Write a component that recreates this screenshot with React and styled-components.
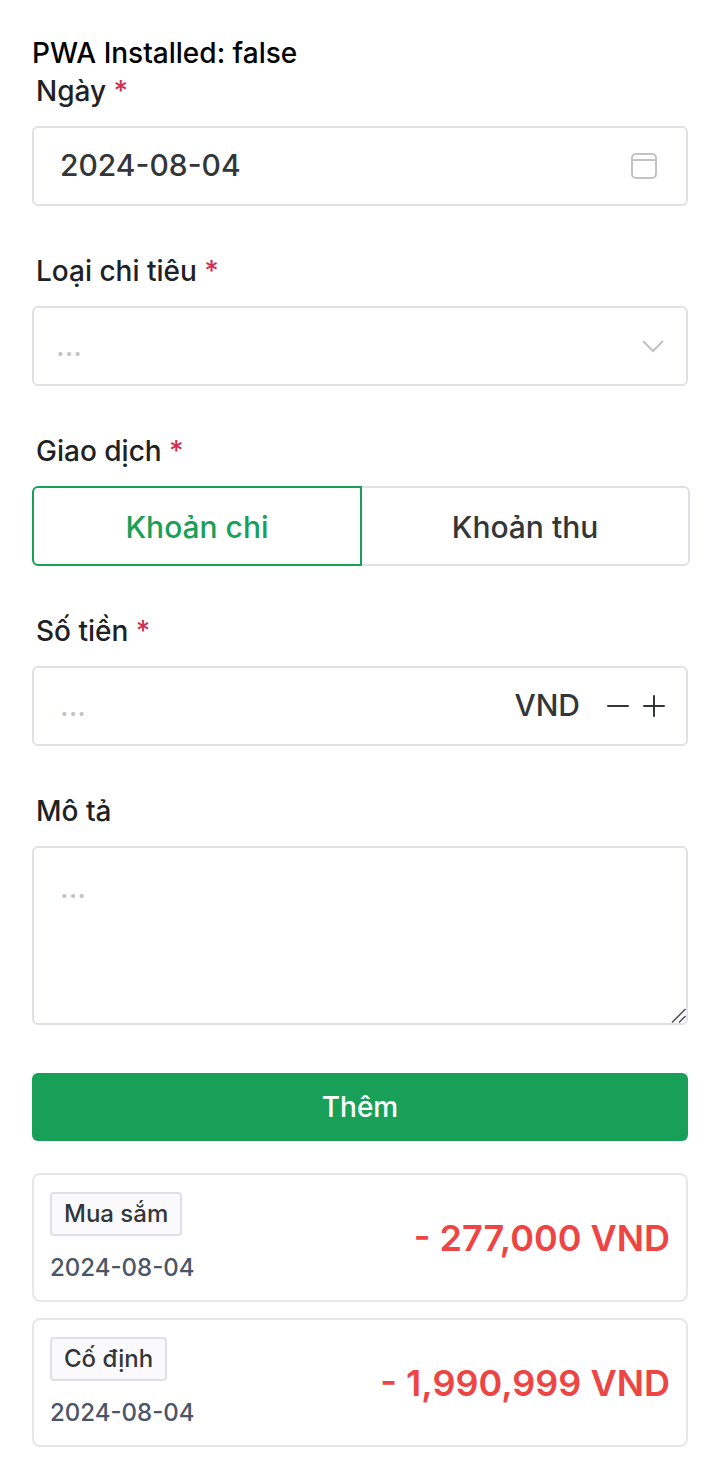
import React, { useState } from "react";
import styled, { createGlobalStyle } from "styled-components";

const GlobalStyle = createGlobalStyle`
  *, *::before, *::after { box-sizing: border-box; }
  body {
    margin: 0;
    background: #fff;
    color: #000;
    font-family: Inter, "Liberation Sans", sans-serif;
    font-size: 28px;
    font-weight: 500;
    line-height: 42px;
  }
  button, input, select, textarea { font: inherit; color: inherit; margin: 0; }
`;

const Page = styled.main`
  padding: 32px;
`;

const Status = styled.p`
  margin: 0;
`;

const Field = styled.div`
  padding-bottom: 48px;
`;

const Group = styled.fieldset`
  min-width: 0;
  margin: 0;
  border: 0;
  padding: 0 0 48px;
`;

const Label = styled.label`
  display: block;
  float: ${(p) => (p.as === "legend" ? "left" : "none")};
  width: 100%;
  height: 52px;
  padding: 0 0 0 4px;
  color: #1f2225;
  line-height: 35px;
`;

const Required = styled.span`
  color: #d03050;
`;

const Box = styled.div`
  display: flex;
  align-items: center;
  clear: both;
  height: 80px;
  padding-right: ${(p) => p.$right}px;
  border: 2px solid #e0e0e6;
  border-radius: 6px;
  background: #fff;
  color: #333639;
  font-size: 30px;
`;

const TextInput = styled.input`
  flex: 1;
  min-width: 0;
  height: 100%;
  padding: 0 0 2px 26px;
  border: 0;
  outline: 0;
  background: transparent;
  &::placeholder { color: #c2c2c2; font-weight: 400; opacity: 1; }
`;

const SelectWrap = styled.div`
  display: grid;
  align-items: center;
  & > * { grid-area: 1 / 1; }
  & > svg { justify-self: end; margin-right: 24px; pointer-events: none; }
`;

const Select = styled.select`
  width: 100%;
  height: 80px;
  padding: 0 60px 2px 22px;
  border: 2px solid #e0e0e6;
  border-radius: 6px;
  outline: 0;
  appearance: none;
  background: #fff;
  color: ${(p) => (p.value ? "#333639" : "#c2c2c2")};
  font-size: 30px;
  font-weight: ${(p) => (p.value ? 500 : 400)};
`;

const Segments = styled.div`
  display: flex;
  clear: both;
  margin-right: -2px;
`;

const Segment = styled.label`
  position: relative;
  flex: 1;
  display: flex;
  align-items: center;
  justify-content: center;
  height: 80px;
  padding-top: 2px;
  border: 2px solid #e0e0e6;
  color: #333639;
  font-size: 30px;
  cursor: pointer;
  &:first-child { border-radius: 6px 0 0 6px; }
  &:last-child { border-radius: 0 6px 6px 0; margin-left: -2px; }
  &:has(input:checked) { z-index: 1; border-color: #18a058; color: #18a058; }
`;

const Radio = styled.input`
  position: absolute;
  inset: 0;
  width: 100%;
  height: 100%;
  opacity: 0;
  cursor: pointer;
`;

const Currency = styled.span`
  margin-right: 20px;
  padding-bottom: 2px;
`;

const StepButton = styled.button`
  display: flex;
  padding: 0;
  border: 0;
  background: none;
  cursor: pointer;
`;

const TextAreaWrap = styled.div`
  position: relative;
  & > svg {
    position: absolute;
    right: 1px;
    bottom: 1px;
    pointer-events: none;
  }
`;

const TextArea = styled.textarea`
  display: block;
  width: 100%;
  padding: 16px 26px 18px;
  border: 2px solid #e0e0e6;
  border-radius: 6px;
  outline: 0;
  resize: vertical;
  color: #333639;
  font-size: 30px;
  line-height: 47px;
  &::placeholder { color: #c2c2c2; font-weight: 400; opacity: 1; }
  &::-webkit-resizer { background: transparent; }
`;

const Submit = styled.button`
  display: block;
  width: 100%;
  height: 68px;
  border: 0;
  border-radius: 6px;
  background: #18a058;
  color: #fff;
  cursor: pointer;
`;

const Entries = styled.ul`
  display: flex;
  flex-direction: column;
  gap: 16px;
  margin: 32px 0 0;
  padding: 0;
  list-style: none;
`;

const Entry = styled.li`
  display: flex;
  align-items: center;
  justify-content: space-between;
  padding: 17px 16px 15px;
  border: 2px solid #e5e7eb;
  border-radius: 8px;
`;

const Details = styled.div`
  display: flex;
  flex-direction: column;
  align-items: flex-start;
  gap: 15px;
  font-size: 24px;
`;

const Tag = styled.span`
  height: 44px;
  padding: 0 12px;
  border: 2px solid #e0e0e6;
  border-radius: 4px;
  background: #fafafc;
  color: #333639;
  line-height: 40px;
`;

const DateText = styled.time`
  color: #4a5568;
  line-height: 34px;
`;

const Amount = styled.span`
  padding-bottom: 2px;
  color: #ef4444;
  font-size: 36px;
  font-weight: 600;
`;

const CalendarIcon = () => (
  <svg width="28" height="28" viewBox="0 0 28 28" fill="none" stroke="#c2c2c2" strokeWidth="2" aria-hidden="true">
    <rect x="2" y="2" width="24" height="24" rx="4" />
    <path d="M2 8H26" />
  </svg>
);

const ChevronIcon = () => (
  <svg width="22" height="14" viewBox="0 0 22 14" fill="none" stroke="#c2c2c2" strokeWidth="2" aria-hidden="true">
    <path d="M1 2L11 12L21 2" />
  </svg>
);

const StepIcon = ({ plus }) => (
  <svg width="36" height="36" viewBox="0 0 36 36" fill="none" stroke="#333639" strokeWidth="2" strokeLinecap="round" aria-hidden="true">
    <path d={plus ? "M8 18H28M18 8V28" : "M8 18H28"} />
  </svg>
);

const ResizeGrip = () => (
  <svg width="16" height="16" viewBox="0 0 16 16" fill="none" stroke="#555" strokeWidth="1.6" aria-hidden="true">
    <path d="M1 14.5L14.5 1M8 14.5L14.5 8" />
  </svg>
);

const Star = () => <Required>&nbsp;*</Required>;

const entries = [
  { category: "Mua sắm", date: "2024-08-04", amount: "- 277,000 VND" },
  { category: "Cố định", date: "2024-08-04", amount: "- 1,990,999 VND" },
];

export default function App() {
  const [date, setDate] = useState("2024-08-04");
  const [category, setCategory] = useState("");
  const [kind, setKind] = useState("Khoản chi");
  const [money, setMoney] = useState("");
  const step = (n) => setMoney(String((Number(money) || 0) + n));

  return (
    <>
      <GlobalStyle />
      <Page>
        <Status>PWA Installed: false</Status>
        <form onSubmit={(e) => e.preventDefault()}>
          <Field>
            <Label htmlFor="date">Ngày<Star /></Label>
            <Box $right={28}>
              <TextInput id="date" value={date} onChange={(e) => setDate(e.target.value)} />
              <CalendarIcon />
            </Box>
          </Field>
          <Field>
            <Label htmlFor="category">Loại chi tiêu<Star /></Label>
            <SelectWrap>
              <Select id="category" value={category} onChange={(e) => setCategory(e.target.value)}>
                <option value="">...</option>
                {entries.map((e) => <option key={e.category}>{e.category}</option>)}
              </Select>
              <ChevronIcon />
            </SelectWrap>
          </Field>
          <Group>
            <Label as="legend">Giao dịch<Star /></Label>
            <Segments>
              {["Khoản chi", "Khoản thu"].map((name) => (
                <Segment key={name}>
                  <Radio type="radio" name="kind" checked={kind === name} onChange={() => setKind(name)} />
                  {name}
                </Segment>
              ))}
            </Segments>
          </Group>
          <Field>
            <Label htmlFor="money">Số tiền<Star /></Label>
            <Box $right={14}>
              <TextInput id="money" inputMode="numeric" placeholder="..." value={money} onChange={(e) => setMoney(e.target.value)} />
              <Currency>VND</Currency>
              <StepButton type="button" aria-label="-" onClick={() => step(-1)}><StepIcon /></StepButton>
              <StepButton type="button" aria-label="+" onClick={() => step(1)}><StepIcon plus /></StepButton>
            </Box>
          </Field>
          <Field>
            <Label htmlFor="note">Mô tả</Label>
            <TextAreaWrap>
              <TextArea id="note" rows={3} placeholder="..." />
              <ResizeGrip />
            </TextAreaWrap>
          </Field>
          <Submit type="submit">Thêm</Submit>
        </form>
        <Entries>
          {entries.map((e) => (
            <Entry key={e.category}>
              <Details>
                <Tag>{e.category}</Tag>
                <DateText dateTime={e.date}>{e.date}</DateText>
              </Details>
              <Amount>{e.amount}</Amount>
            </Entry>
          ))}
        </Entries>
      </Page>
    </>
  );
}
